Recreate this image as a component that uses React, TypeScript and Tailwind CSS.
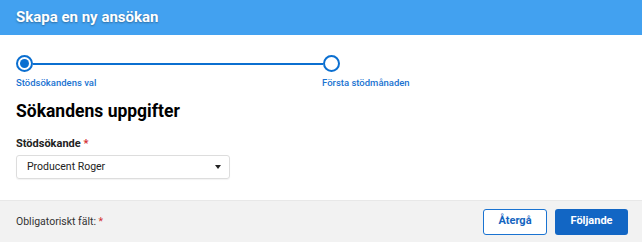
export default function App() {
  return (
    <div className="w-[642px] h-[242px] bg-white flex flex-col overflow-hidden" style={{ fontFamily: 'Roboto, "Liberation Sans", sans-serif' }}>
      {/* Header */}
      <div className="h-[35px] bg-[#42a1f0] flex items-center px-4">
        <h1 className="text-white text-[15px] font-bold [text-shadow:0_1px_2px_rgba(0,0,0,0.35)]">Skapa en ny ansökan</h1>
      </div>

      {/* Body */}
      <div className="flex-1 px-4 pt-[20px]">
        {/* Stepper */}
        <div className="flex items-center w-[324px]">
          <div className="w-[17px] h-[17px] rounded-full border-2 border-[#0b6fd0] flex items-center justify-center shrink-0">
            <div className="w-[9px] h-[9px] rounded-full bg-[#0b6fd0]" />
          </div>
          <div className="flex-1 h-[2px] bg-[#0b6fd0]" />
          <div className="w-[17px] h-[17px] rounded-full border-2 border-[#0b6fd0] shrink-0" />
        </div>
        <div className="flex mt-[4px] text-[9.5px] text-[#1a73d1] font-medium">
          <span className="w-[306px]">Stödsökandens val</span>
          <span>Första stödmånaden</span>
        </div>

        <h2 className="mt-[11px] text-[17.5px] font-bold text-black leading-tight">Sökandens uppgifter</h2>

        <div className="mt-[13px] text-[11px] font-bold text-[#222]">
          Stödsökande <span className="text-[#d32f2f]">*</span>
        </div>
        <div className="mt-[2px] w-[214px] h-[24px] border border-[#ddd] rounded-[3px] flex items-center justify-between pl-[10px] pr-[8px] text-[10.5px] text-[#222] shadow-[0_1px_1px_rgba(0,0,0,0.05)]">
          <span>Producent Roger</span>
          <span className="w-0 h-0 border-l-[3px] border-r-[3px] border-t-[4px] border-l-transparent border-r-transparent border-t-[#222]" />
        </div>
      </div>

      {/* Footer */}
      <div className="h-[42px] bg-[#f2f2f2] border-t border-[#e8e8e8] flex items-center justify-between pl-4 pr-[14px]">
        <div className="text-[10.5px] text-[#333]">
          Obligatoriskt fält: <span className="text-[#d32f2f]">*</span>
        </div>
        <div className="flex gap-[8px]">
          <button className="w-[64px] h-[26px] bg-white border border-[#1a73d1] rounded-[3px] text-[11px] font-bold text-[#1565c0]">Återgå</button>
          <button className="w-[73px] h-[26px] bg-[#1266c4] rounded-[3px] text-[11px] font-bold text-white">Följande</button>
        </div>
      </div>
    </div>
  );
}
